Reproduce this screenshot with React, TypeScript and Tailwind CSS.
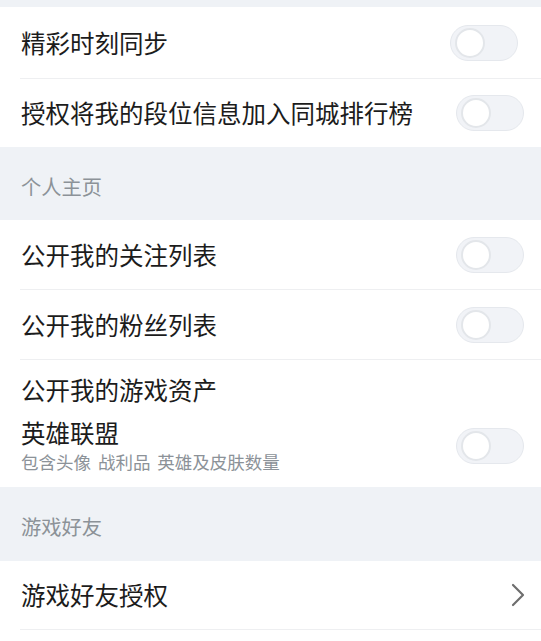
import React from "react";

function Toggle({ className = "" }: { className?: string }) {
  return (
    <div
      className={`relative h-[36px] w-[68px] shrink-0 rounded-full border border-[#e5e8ed] bg-[#f1f3f7] ${className}`}
    >
      <div className="absolute left-[4px] top-[2px] h-[30px] w-[30px] rounded-full border-2 border-[#e3e6ea] bg-white" />
    </div>
  );
}

function Row({
  label,
  height,
  toggleClass = "mr-[17px]",
  divider = true,
  children,
}: {
  label: string;
  height: string;
  toggleClass?: string;
  divider?: boolean;
  children?: React.ReactNode;
}) {
  return (
    <div className="ml-[20px]">
      <div
        className={`flex items-center justify-between ${height} ${divider ? "border-b border-[#eeeff1]" : ""}`}
      >
        <span className="pl-[1px] text-[24.5px] leading-[30px] text-[#1c1c1c]">{label}</span>
        {children ?? <Toggle className={toggleClass} />}
      </div>
    </div>
  );
}

function Header({ label, height }: { label: string; height: string }) {
  return (
    <div className={`flex items-center pl-[21px] pt-[6px] ${height}`}>
      <span className="text-[20.25px] leading-[26px] text-[#8c9298]">{label}</span>
    </div>
  );
}

export default function App() {
  return (
    <div
      className="h-[641px] w-[541px] overflow-hidden bg-[#eff2f6]"
      style={{ fontFamily: '"Noto Sans CJK SC", "Noto Sans", sans-serif' }}
    >
      <div className="h-[7px]" />
      <div className="bg-white">
        <Row label="精彩时刻同步" height="h-[72px]" toggleClass="mr-[23px]" />
        <Row label="授权将我的段位信息加入同城排行榜" height="h-[68px]" divider={false} />
      </div>
      <Header label="个人主页" height="h-[73px]" />
      <div className="bg-white">
        <Row label="公开我的关注列表" height="h-[70px]" />
        <Row label="公开我的粉丝列表" height="h-[70px]" />
        <div className="ml-[20px] pb-[14px] pt-[15px]">
          <div className="pl-[1px] text-[24.5px] leading-[30px] text-[#1c1c1c]">公开我的游戏资产</div>
          <div className="mt-[13px] flex items-center justify-between">
            <div className="pl-[1px]">
              <div className="text-[24.5px] leading-[30px] text-[#1c1c1c]">英雄联盟</div>
              <div className="mt-[3px] text-[17.5px] leading-[22px] text-[#8c9298] [word-spacing:3px]">
                包含头像 战利品 英雄及皮肤数量
              </div>
            </div>
            <Toggle className="mr-[17px]" />
          </div>
        </div>
      </div>
      <Header label="游戏好友" height="h-[74px]" />
      <div className="h-[80px] bg-white">
        <Row label="游戏好友授权" height="h-[69px]">
          <svg
            width="14"
            height="24"
            viewBox="0 0 14 24"
            className="mr-[16px]"
            fill="none"
            stroke="#6e6e6e"
            strokeWidth="2.2"
            strokeLinecap="round"
            strokeLinejoin="round"
          >
            <path d="M2 2 L12 12 L2 22" />
          </svg>
        </Row>
      </div>
    </div>
  );
}
